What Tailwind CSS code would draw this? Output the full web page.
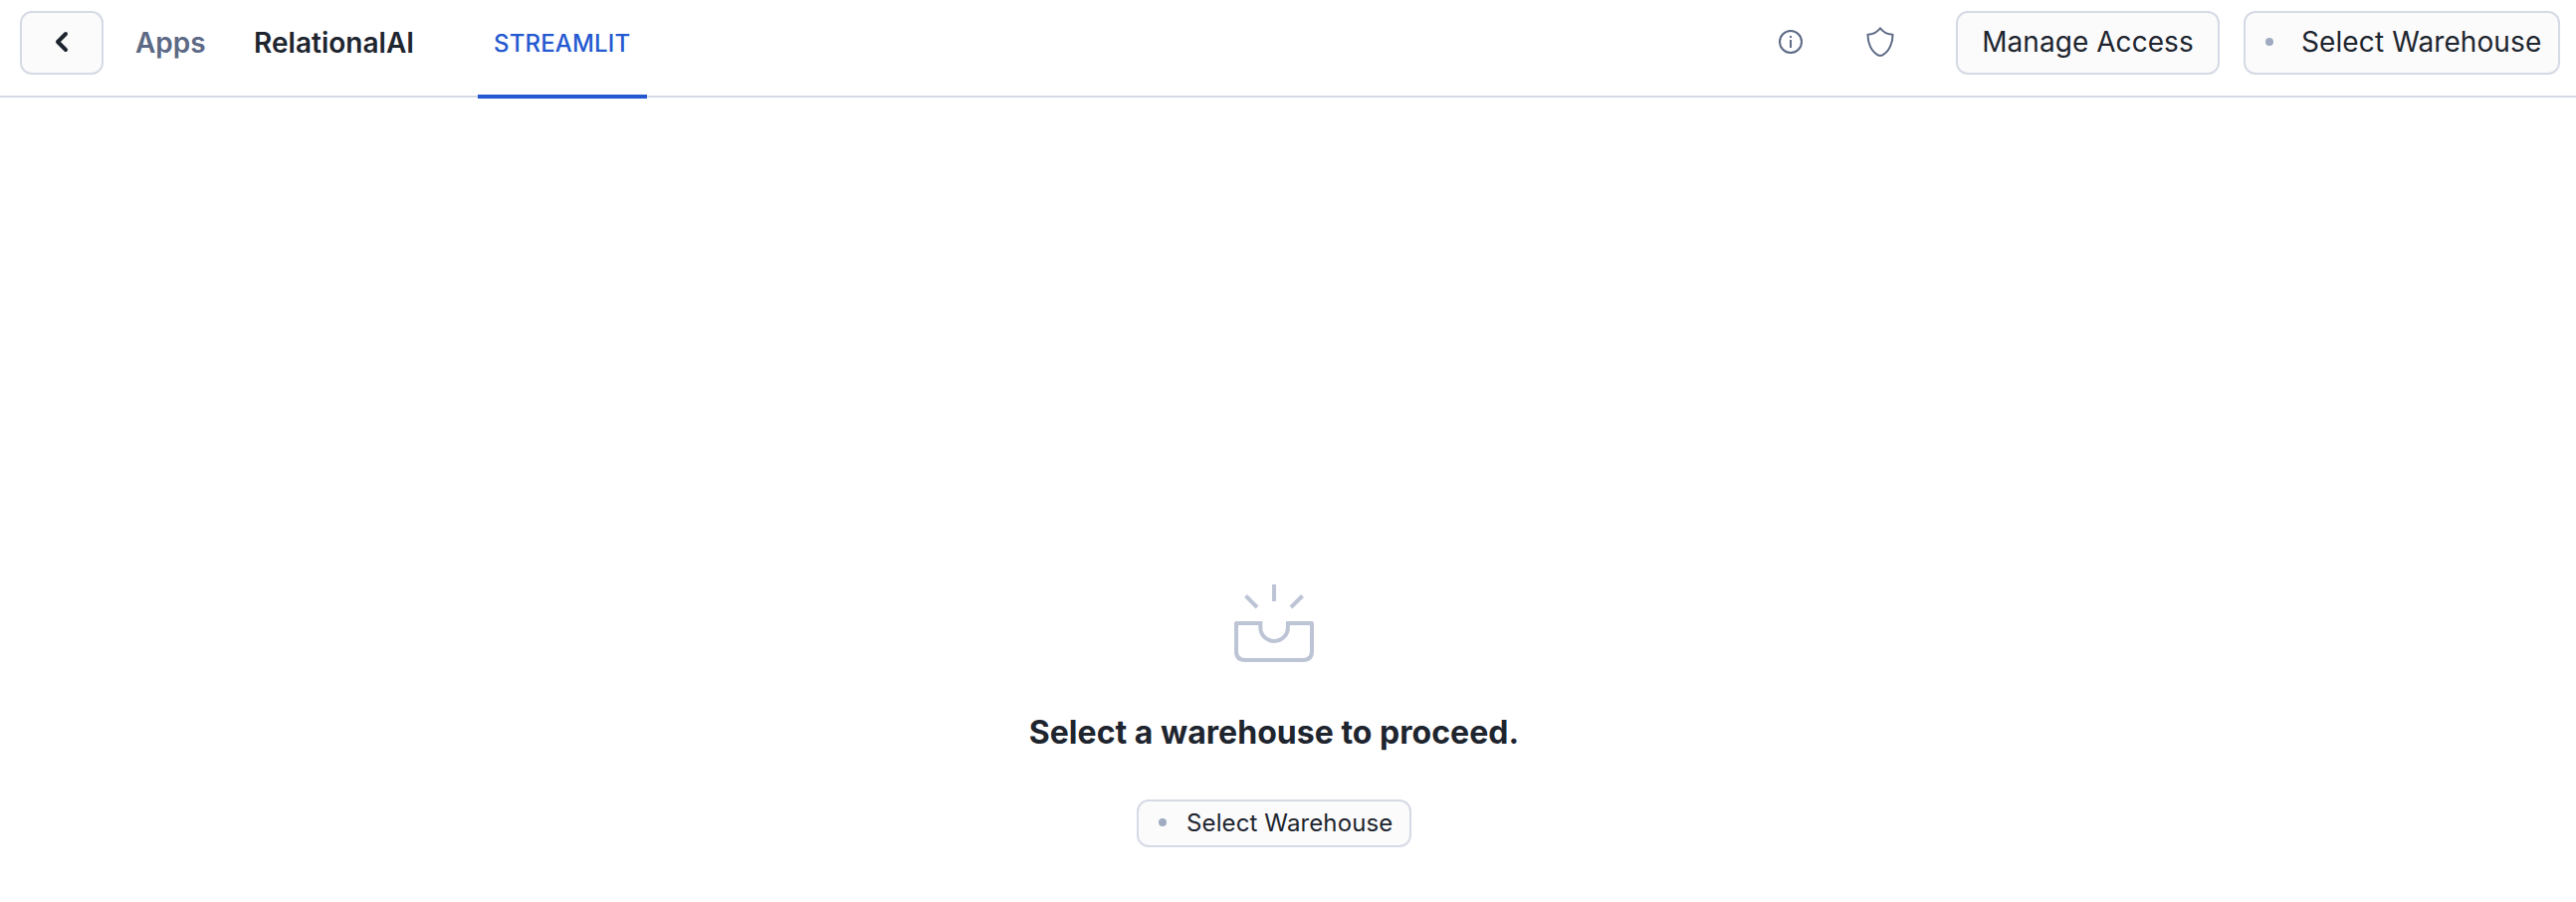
<!DOCTYPE html>
<html lang="en">
<head>
<meta charset="utf-8">
<title>RelationalAI</title>
<script src="https://cdn.jsdelivr.net/npm/@tailwindcss/browser@4"></script>
</head>
<body class="bg-white text-[#1e252f] font-[Inter,sans-serif] h-[906px] overflow-hidden flex flex-col">
<header class="h-[98px] shrink-0 border-b-2 border-[#d5dae4] flex items-start pl-5 pr-4">
  <button class="mt-[11px] w-[84px] h-16 rounded-xl border-2 border-[#d5dae4] bg-[#fbfbfb] flex items-center justify-center">
    <svg class="w-6 h-6" viewBox="0 0 24 24" fill="none" stroke="#1e252f" stroke-width="4" stroke-linecap="round" stroke-linejoin="round"><path d="M16 3L8 11L16 19"/></svg>
  </button>
  <nav class="flex text-[28px] leading-16 font-semibold mt-[11px] whitespace-nowrap">
    <a class="ml-8 w-[119px] text-[#5d6a85]">Apps</a>
    <a class="w-[225px] tracking-[0.03px]">RelationalAI</a>
  </nav>
  <div class="w-[170px] h-[99px] border-b-4 border-[#2559d0] pl-4 pt-3 text-[24px] leading-16 font-medium tracking-[0.15px] text-[#2559d0]">STREAMLIT</div>
  <div class="ml-auto mt-[11px] h-16 flex items-center">
    <svg class="w-6 h-6 mr-16 relative -top-px" viewBox="0 0 24 24" fill="none" stroke="#5d6a85" stroke-width="2"><circle cx="12" cy="12" r="11"/><path d="M12 10v8M12 6v2"/></svg>
    <svg class="w-7 h-[30px] mr-[62px] relative -top-px" viewBox="0 0 28 30" fill="none" stroke="#5d6a85" stroke-width="2" stroke-linejoin="round"><path d="M14 1.300C11.500 5 7 7.300 1.500 7.800C1.300 16 5 24.500 11.300 28.100Q14 29.600 16.700 28.100C23 24.500 26.700 16 26.500 7.800C21 7.300 16.500 5 14 1.300Z"/></svg>
    <button class="w-[265px] h-16 rounded-xl border-2 border-[#d5dae4] bg-[#fbfbfb] text-[28px] leading-[58px] pb-0.5 whitespace-nowrap tracking-[0.06px] mr-6">Manage Access</button>
    <button class="w-[318px] h-16 rounded-xl border-2 border-[#d5dae4] bg-[#fbfbfb] text-[28px] leading-[58px] pb-0.5 whitespace-nowrap tracking-[0.1px] flex items-center pl-5">
      <span class="w-2 h-2 rounded-full bg-[#a0abc1] mr-7"></span>Select Warehouse
    </button>
  </div>
</header>
<main class="flex flex-col items-center pr-7">
  <svg class="w-20 h-[78px] mt-[489px]" viewBox="0 0 80 78" fill="none" stroke="#bdc4d5" stroke-width="4" stroke-linejoin="round"><path d="M40 0v17M11.500 11.500L23 23M68.500 11.500L57 23M26.500 39H2V67Q2 76 11 76H69Q78 76 78 67V39H53.500"/><path stroke-linejoin="miter" d="M20 39H26.300V43.200A13.800 13.800 0 0 0 53.900 43.200V39H60"/></svg>
  <h1 class="mt-[51px] text-[32px] leading-10 font-bold whitespace-nowrap tracking-[0.03px]">Select a warehouse to proceed.</h1>
  <button class="mt-[47px] w-[276px] h-12 rounded-xl border-2 border-[#d5dae4] bg-[#fbfbfb] text-[24px] leading-[42px] whitespace-nowrap tracking-[0.12px] flex items-center pl-5">
    <span class="w-2 h-2 rounded-full bg-[#a0abc1] mr-5 relative -top-px"></span>Select Warehouse
  </button>
</main>
</body>
</html>
